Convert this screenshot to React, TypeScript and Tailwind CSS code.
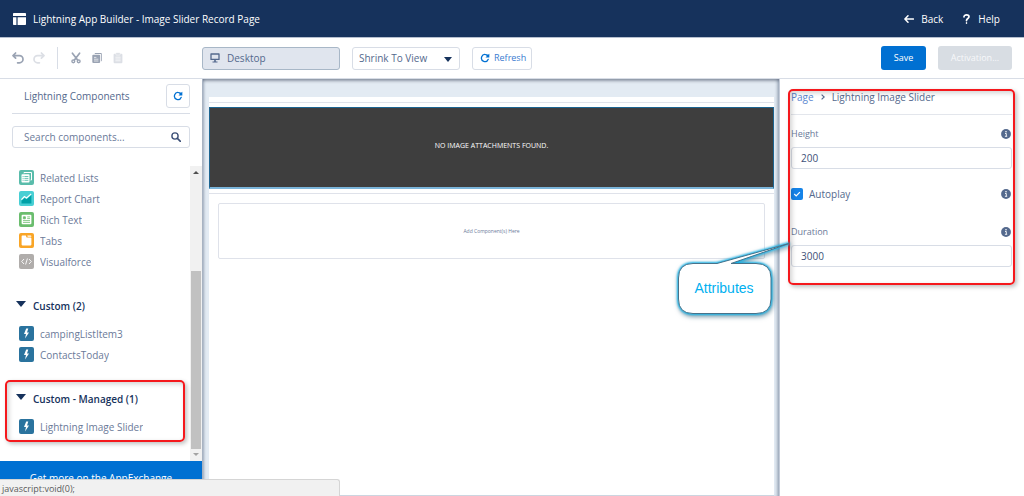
import type { ReactNode } from "react";

interface IconProps {
  className?: string;
}

interface ComponentItem {
  label: string;
  color: string;
  glyph: ReactNode;
}

function RefreshIcon({ className }: IconProps) {
  return (
    <svg viewBox="0 0 12 12" className={className} fill="none" aria-hidden="true">
      <path d="M7.4 2.1A4.2 4.2 0 1 0 9.9 7.6" stroke="currentColor" strokeWidth="1.5" strokeLinecap="round" />
      <path d="M11.2.8v4.6H6.6l1.7-1.7-1.2-1 1-1.4 1.5.9z" fill="currentColor" />
    </svg>
  );
}

function UndoIcon({ className }: IconProps) {
  return (
    <svg viewBox="0 0 12 12" className={className} fill="none" aria-hidden="true">
      <path
        d="M3.6 1 1 3.6l2.6 2.6M1.4 3.6h6a3.6 3.6 0 0 1 0 7.2H5.6"
        stroke="currentColor"
        strokeWidth="1.7"
        strokeLinecap="round"
        strokeLinejoin="round"
      />
    </svg>
  );
}

function CutIcon({ className }: IconProps) {
  return (
    <svg viewBox="0 0 10 12" className={className} fill="none" stroke="currentColor" aria-hidden="true">
      <path d="M1.4 1.2 6.8 8.2M8.6 1.2 3.2 8.2" strokeWidth="1.7" strokeLinecap="round" />
      <circle cx="2.3" cy="9.3" r="1.4" strokeWidth="1.4" />
      <circle cx="7.7" cy="9.3" r="1.4" strokeWidth="1.4" />
    </svg>
  );
}

function CopyIcon({ className }: IconProps) {
  return (
    <svg viewBox="0 0 10 12" className={className} aria-hidden="true">
      <path d="M3.5 1h5.3c.6 0 1 .4 1 1v6.4c0 .5-.4.9-.9.9V2.1H2.6C2.6 1.4 3 1 3.5 1z" fill="currentColor" />
      <rect x=".3" y="2.8" width="7.8" height="8.2" rx="1" fill="currentColor" />
      <path d="M2 5.4h2.4M2 7.2h4.4M2 9h4.4" stroke="#fff" strokeWidth=".7" />
    </svg>
  );
}

function PasteIcon({ className }: IconProps) {
  return (
    <svg viewBox="0 0 10 12" className={className} aria-hidden="true">
      <rect x=".6" y="1.8" width="8.8" height="9.4" rx="1" fill="currentColor" />
      <rect x="2.8" y=".7" width="4.4" height="2.4" rx=".8" fill="currentColor" stroke="#fff" strokeWidth=".5" />
      <path d="M2.4 5.2h5.2M2.4 7h5.2M2.4 8.8h5.2" stroke="#fff" strokeWidth=".7" />
    </svg>
  );
}

function InfoIcon() {
  return (
    <svg viewBox="0 0 10 10" className="size-[10px] text-[#54698d]" aria-hidden="true">
      <circle cx="5" cy="5" r="4.9" fill="currentColor" />
      <circle cx="5" cy="2.7" r=".8" fill="#fff" />
      <path d="M4 4.5h1.3v2.6M3.9 7.3h2.3" stroke="#fff" strokeWidth=".9" fill="none" />
    </svg>
  );
}

const bolt = <path d="M7.2 2.6 5 8h2l-1 4.6L10 6.6H8l1.3-4z" fill="#fff" />;

const standardItems: ComponentItem[] = [
  {
    label: "Related Lists",
    color: "bg-[#59bcab]",
    glyph: (
      <>
        <path d="M5 3.4V2.5h7.5V10h-1" fill="none" stroke="#fff" strokeWidth="1" />
        <rect x="2.5" y="4.3" width="8" height="8.3" rx=".8" fill="#fff" />
        <path d="M3.6 6.5h1M5.4 6.5h4M3.6 8.4h1M5.4 8.4h4M3.6 10.3h1M5.4 10.3h4" stroke="#59bcab" strokeWidth=".9" />
      </>
    ),
  },
  {
    label: "Report Chart",
    color: "bg-[#48cfd4]",
    glyph: (
      <>
        <path d="m2.5 9.8 3-2.8 2 1.2L12.4 4v8.4H2.5z" fill="#00a1a7" />
        <path d="m2.4 8.6 3-3 2.2 1.3 4.6-4" fill="none" stroke="#fff" strokeWidth="1.2" />
      </>
    ),
  },
  {
    label: "Rich Text",
    color: "bg-[#6bbd6e]",
    glyph: (
      <>
        <rect x="2.6" y="2.8" width="9.8" height="9.4" rx="1" fill="#fff" />
        <path d="M4.4 4.8h2v2h-2zM8.2 4.9H11M8.2 6.6H11M4 8.6h7M4 10.4h7" fill="#6bbd6e" stroke="#6bbd6e" strokeWidth=".8" />
      </>
    ),
  },
  {
    label: "Tabs",
    color: "bg-[#f9a526]",
    glyph: (
      <>
        <path d="M2.6 3.4c0-.5.3-.8.8-.8h3.4l.8 2h4c.5 0 .8.3.8.8v6.2c0 .5-.3.8-.8.8H3.4a.8.8 0 0 1-.8-.8z" fill="#fff" />
        <path d="M8.3 2.6h3.3c.5 0 .8.3.8.8v.4H8.7z" fill="#fff" />
      </>
    ),
  },
  {
    label: "Visualforce",
    color: "bg-[#b0adab]",
    glyph: <path d="M5 5 2.7 7.5 5 10M10 5l2.3 2.5L10 10M8.4 4.5l-1.8 6" fill="none" stroke="#fff" strokeWidth=".9" />,
  },
];

const customItems: ComponentItem[] = [
  { label: "campingListItem3", color: "bg-[#2a739e]", glyph: bolt },
  { label: "ContactsToday", color: "bg-[#2a739e]", glyph: bolt },
];

const managedItems: ComponentItem[] = [{ label: "Lightning Image Slider", color: "bg-[#2a739e]", glyph: bolt }];

function ComponentList({ items }: { items: ComponentItem[] }) {
  return (
    <ul>
      {items.map((item) => (
        <li key={item.label} className="flex h-[21px] items-center gap-1.5 pl-[19px]">
          <span className={`size-[15px] shrink-0 rounded-xs ${item.color}`}>
            <svg viewBox="0 0 15 15" className="size-[15px]" aria-hidden="true">
              {item.glyph}
            </svg>
          </span>
          <a href="#" className="truncate text-[#6b7a99]">
            {item.label}
          </a>
        </li>
      ))}
    </ul>
  );
}

function SectionToggle({ title }: { title: string }) {
  return (
    <button type="button" className="flex h-5 items-center gap-[7px] pl-4 font-semibold text-[#16325c]" aria-expanded="true">
      <svg viewBox="0 0 10 6" className="mb-1 h-[6px] w-[10px]" aria-hidden="true">
        <path d="M0 0h10L5 6z" fill="currentColor" />
      </svg>
      {title}
    </button>
  );
}

function Header() {
  return (
    <header className="flex h-[38px] shrink-0 items-center border-b border-[#b5bfcf] bg-[#16325c] pr-6 pl-[13px] text-white">
      <svg viewBox="0 0 13 12" className="h-3 w-[13px]" fill="currentColor" aria-hidden="true">
        <path d="M.8 0h11.4c.5 0 .8.3.8.8V3H0V.8C0 .3.3 0 .8 0zM0 4.2h3.4V12H.8a.8.8 0 0 1-.8-.8zM4.6 4.2H13v7c0 .5-.3.8-.8.8H4.6z" />
      </svg>
      <h1 className="ml-[7px]">Lightning App Builder - Image Slider Record Page</h1>
      <nav className="ml-auto flex items-center gap-5">
        <a href="#" className="flex items-center gap-[7px]">
          <svg viewBox="0 0 10 8" className="h-2 w-[10px]" fill="none" stroke="currentColor" strokeWidth="1.5" aria-hidden="true">
            <path d="M4 .8.9 4 4 7.2M1 4h8.4" strokeLinecap="round" strokeLinejoin="round" />
          </svg>
          Back
        </a>
        <a href="#" className="flex items-center gap-2">
          <svg viewBox="0 0 7 10" className="h-[10px] w-[7px]" fill="none" stroke="currentColor" aria-hidden="true">
            <path d="M1 2.8C1 .2 6 .3 6 2.8 6 4.6 3.5 4.5 3.5 6.6" strokeWidth="1.7" strokeLinecap="round" />
            <circle cx="3.5" cy="9" r=".5" strokeWidth="1" fill="currentColor" />
          </svg>
          Help
        </a>
      </nav>
    </header>
  );
}

function Toolbar() {
  return (
    <div className="flex h-[41px] shrink-0 items-center border-b border-[#d8dde6] bg-white px-3">
      <div className="flex w-[190px] shrink-0 items-center text-[#9aa3b3]">
        <button type="button" aria-label="Undo">
          <UndoIcon className="size-3" />
        </button>
        <button type="button" aria-label="Redo" disabled className="ml-[9px] text-[#dcdfe5]">
          <UndoIcon className="size-3 -scale-x-100" />
        </button>
        <span className="ml-3 h-[22px] w-px bg-[#d8dde6]" />
        <button type="button" aria-label="Cut" className="ml-[13px]">
          <CutIcon className="h-3 w-[10px]" />
        </button>
        <button type="button" aria-label="Copy" className="ml-[11px]">
          <CopyIcon className="h-3 w-[10px]" />
        </button>
        <button type="button" aria-label="Paste" disabled className="ml-[11px] text-[#dcdfe5]">
          <PasteIcon className="h-3 w-[10px]" />
        </button>
      </div>
      <button
        type="button"
        className="flex h-[23px] w-[138px] items-center gap-[7px] rounded-[3px] border border-[#a8b7c7] bg-[#e0e5ee] pl-[7px] text-[#54698d]"
      >
        <svg viewBox="0 0 10 10" className="size-[10px]" aria-hidden="true">
          <path d="M1 1h8v5.4H1z" fill="none" stroke="currentColor" strokeWidth="1.3" strokeLinejoin="round" />
          <path d="M4.2 7h1.6v1.5h1.7v1h-5v-1h1.7z" fill="currentColor" />
        </svg>
        Desktop
      </button>
      <div className="relative ml-3 text-[#54698d]">
        <select
          aria-label="Canvas size"
          className="block h-[23px] w-[108px] appearance-none rounded-[3px] border border-[#d8dde6] bg-white pl-1.5"
          defaultValue="shrink"
        >
          <option value="shrink">Shrink To View</option>
        </select>
        <svg viewBox="0 0 8 5" className="pointer-events-none absolute top-[10px] right-2 h-[5px] w-2" aria-hidden="true">
          <path d="M0 0h8L4 5z" fill="#16325c" />
        </svg>
      </div>
      <button
        type="button"
        className="ml-3 flex h-[23px] w-[60px] items-center gap-1 rounded-[3px] border border-[#d8dde6] bg-white pl-[7px] text-[9px] text-[#3a7bd0]"
      >
        <RefreshIcon className="size-[10px] shrink-0 text-[#0070d2]" />
        Refresh
      </button>
      <div className="ml-auto flex gap-3 text-[9px] text-white">
        <button type="button" className="h-6 w-[45px] rounded-[3px] bg-[#0070d2] font-medium">
          Save
        </button>
        <button type="button" disabled className="h-6 w-[74px] rounded-[3px] bg-[#d8dde3] text-[#f7f8fa]">
          Activation...
        </button>
      </div>
    </div>
  );
}

function Sidebar() {
  return (
    <aside className="flex w-[203px] shrink-0 flex-col border-r border-[#a8b3c2] bg-white">
      <div className="mx-3 flex h-[35px] shrink-0 items-center justify-between border-b border-[#d8dde6] pl-3">
        <h2 className="text-[#54698d]">Lightning Components</h2>
        <button
          type="button"
          aria-label="Refresh components"
          className="flex size-6 items-center justify-center rounded-[3px] border border-[#d8dde6] text-[#0070d2]"
        >
          <RefreshIcon className="size-[10px]" />
        </button>
      </div>
      <div className="relative mx-3 mt-3 mb-[18px] shrink-0">
        <input
          type="search"
          aria-label="Search components"
          placeholder="Search components..."
          className="block h-[22px] w-full rounded-[3px] border border-[#d8dde6] pr-6 pl-[11px] placeholder:text-[#6b7a99]"
        />
        <svg viewBox="0 0 10 10" className="absolute top-[6px] right-[9px] size-[10px]" fill="none" stroke="#3e5178" aria-hidden="true">
          <circle cx="4" cy="4" r="3.1" strokeWidth="1.4" />
          <path d="m6.4 6.4 3 3" strokeWidth="1.6" strokeLinecap="round" />
        </svg>
      </div>
      <div className="flex min-h-0 flex-1">
        <div className="min-w-0 flex-1">
          <div className="pt-px">
            <ComponentList items={standardItems} />
          </div>
          <div className="pt-6">
            <SectionToggle title="Custom (2)" />
            <div className="pt-[7px]">
              <ComponentList items={customItems} />
            </div>
          </div>
          <div className="relative mt-6">
            <SectionToggle title="Custom - Managed (1)" />
            <div className="pt-[7px]">
              <ComponentList items={managedItems} />
            </div>
            <Highlight className="-top-[9px] right-[5px] -bottom-[5px] left-[5px]" />
          </div>
        </div>
        <div className="flex w-3 flex-col items-center bg-[#f1f1f1] py-[5px]" aria-hidden="true">
          <svg viewBox="0 0 6 3" className="h-[3px] w-[6px]">
            <path d="M3 0l3 3H0z" fill="#505050" />
          </svg>
          <div className="mt-auto mb-1 h-5/8 w-[10px] bg-[#c1c1c1]" />
          <svg viewBox="0 0 6 3" className="h-[3px] w-[6px]">
            <path d="M0 0h6L3 3z" fill="#a3a3a3" />
          </svg>
        </div>
      </div>
      <a href="#" className="block h-[35px] shrink-0 bg-[#0070d2] pt-[9px] text-center leading-4 text-white">
        Get more on the AppExchange
      </a>
    </aside>
  );
}

function Highlight({ className }: IconProps) {
  return (
    <div
      className={`pointer-events-none absolute rounded-[5px] border-2 border-[#f5181c] shadow-[2px_2px_4px_rgba(0,0,0,0.25),inset_2px_2px_5px_rgba(0,0,0,0.18)] ${className}`}
    />
  );
}

function Canvas() {
  return (
    <main className="flex min-w-0 flex-1 flex-col bg-[#e3ebf3] pt-[18px] pr-[5px] pl-[6px] shadow-[inset_0_3px_3px_-1px_rgba(60,70,90,0.5),inset_3px_0_3px_-2px_rgba(80,100,130,0.4),inset_-3px_0_3px_-1px_rgba(80,100,130,0.4)]">
      <div className="flex-1 border-b border-[#ccd5e0] bg-white pt-[5px]">
        <div className="border-y border-[#dfe2ea] pt-1 pb-1">
          <div className="flex h-[82px] items-center justify-center border border-b-2 border-[#1d6591] border-b-[#7bb5da] bg-[#3e3e3e] pb-1 text-[7px] font-medium text-white">
            NO IMAGE ATTACHMENTS FOUND.
          </div>
        </div>
        <div className="mx-[9px] mt-[9px] flex h-14 items-center justify-center rounded-xs border border-[#dfe2ea] text-[5px] text-[#6b7a99]">
          Add Component(s) Here
        </div>
      </div>
    </main>
  );
}

function NumberField({ id, label, value }: { id: string; label: string; value: string }) {
  return (
    <div>
      <div className="flex h-4 items-center justify-between pr-px text-[9px] text-[#6b7a99]">
        <label htmlFor={id}>{label}</label>
        <InfoIcon />
      </div>
      <input
        id={id}
        type="text"
        defaultValue={value}
        className="mt-[5px] block h-[22px] w-full rounded-[3px] border border-[#d8dde6] bg-white px-[9px] text-[#3e5178]"
      />
    </div>
  );
}

function Callout() {
  return (
    <div className="absolute top-[157px] -left-[106px] h-[84px] w-[120px]">
      <svg viewBox="0 0 120 84" className="absolute inset-0 h-full w-full overflow-visible" aria-hidden="true">
        <path
          d="M19 27.5H43L115 7.5 57 27.5H82Q97 27.5 97 42V63Q97 77.5 82 77.5H19Q4.5 77.5 4.5 63V42Q4.5 27.5 19 27.5Z"
          fill="#fff"
          stroke="#47728a"
          strokeWidth="1"
          className="[filter:drop-shadow(0_0_1px_#12b5ec)_drop-shadow(0_0_1px_#12b5ec)_drop-shadow(1px_2px_2px_rgba(0,60,90,0.5))]"
        />
      </svg>
      <p className="relative pt-11 pr-5 text-center font-['Liberation_Sans',sans-serif] text-sm leading-4 text-[#00b0f0]">
        Attributes
      </p>
    </div>
  );
}

function PropertyPanel() {
  return (
    <aside className="relative w-[245px] shrink-0 border-l border-[#c3cbd8] bg-white pr-3 pl-[11px]">
      <nav className="flex h-9 items-center gap-[7px] border-b border-[#e3e6ec]" aria-label="Breadcrumb">
        <a href="#" className="text-[#5b87cf]">
          Page
        </a>
        <svg viewBox="0 0 4 6" className="h-[6px] w-1" fill="none" stroke="#54698d" strokeWidth="1.2" aria-hidden="true">
          <path d="m.6.6 2.6 2.4L.6 5.4" />
        </svg>
        <span className="text-[#54698d]">Lightning Image Slider</span>
      </nav>
      <form className="pt-[11px]">
        <NumberField id="slider-height" label="Height" value="200" />
        <div className="mt-[14px] mb-5 flex h-[21px] items-center justify-between pr-px">
          <label className="flex items-center gap-1.5 text-[#54698d]">
            <span className="relative size-3">
              <input
                type="checkbox"
                defaultChecked
                className="block size-3 appearance-none rounded-xs bg-[#b0b7c3] checked:bg-[#1583e8]"
              />
              <svg viewBox="0 0 12 12" className="pointer-events-none absolute inset-0 size-3" fill="none" aria-hidden="true">
                <path d="m3.2 6 2 2 3.7-3.9" stroke="#fff" strokeWidth="1.2" />
              </svg>
            </span>
            Autoplay
          </label>
          <InfoIcon />
        </div>
        <NumberField id="slider-duration" label="Duration" value="3000" />
      </form>
      <Highlight className="top-[10px] right-[9px] left-2 h-[196px]" />
      <Callout />
    </aside>
  );
}

export default function App() {
  return (
    <div className="flex h-screen flex-col overflow-hidden bg-white font-['Open_Sans',sans-serif] text-[10px] leading-4">
      <Header />
      <Toolbar />
      <div className="flex min-h-0 flex-1">
        <Sidebar />
        <Canvas />
        <PropertyPanel />
      </div>
      <div className="fixed bottom-0 left-0 h-[17px] w-[340px] rounded-tr-[3px] border-t border-r border-[#d5d5d5] bg-[#f1f1f1] pl-0.5 text-[9px] leading-[17px] text-[#5c5c5c]">
        javascript:void(0);
      </div>
    </div>
  );
}
